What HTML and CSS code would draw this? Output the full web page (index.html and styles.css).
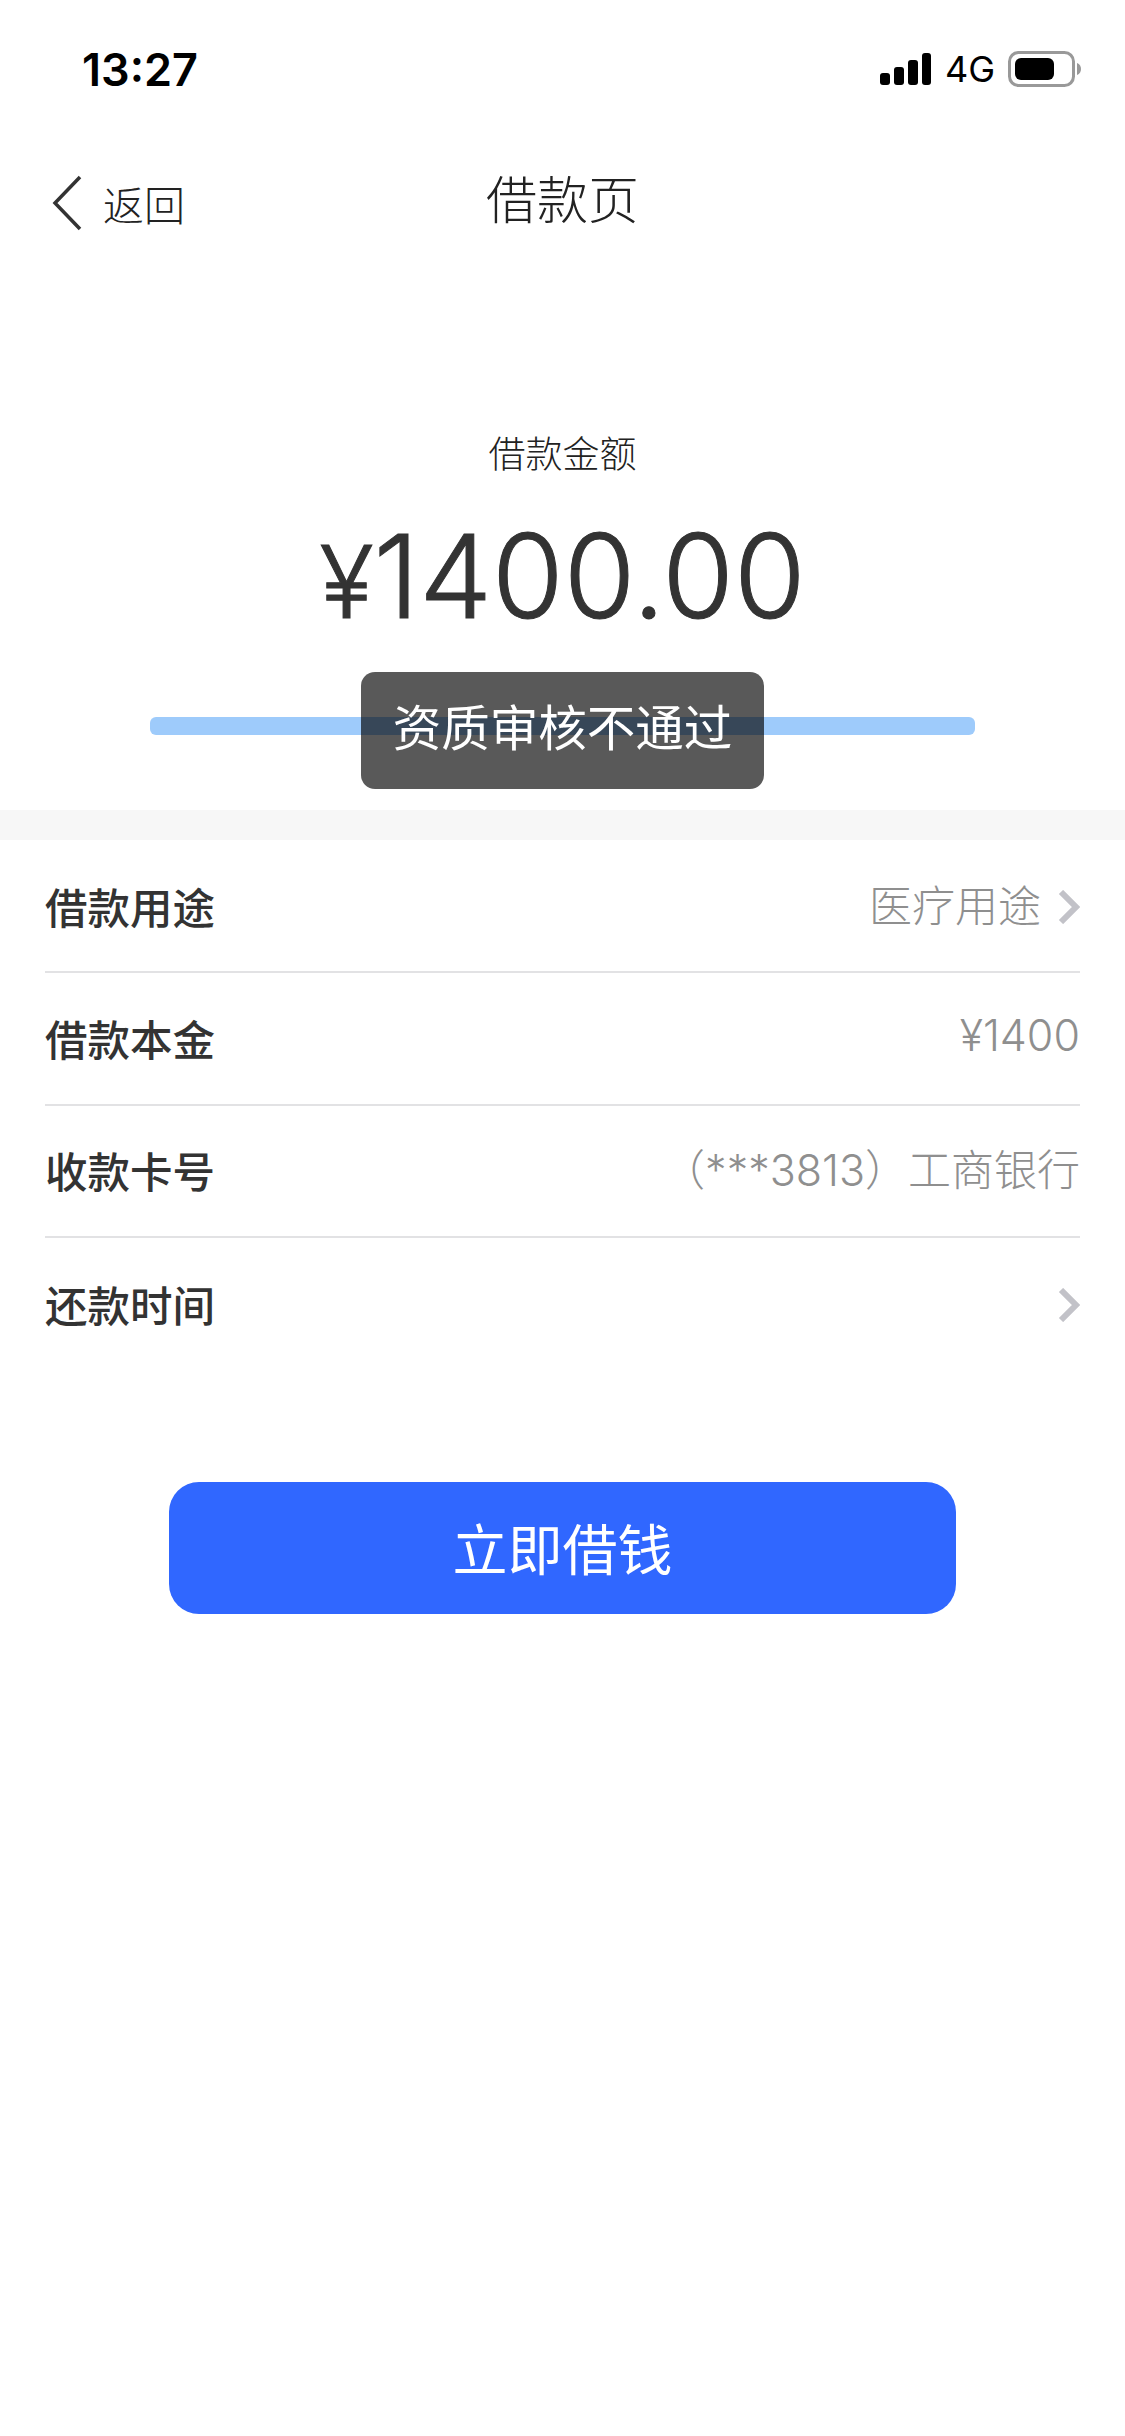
FILE: index.html
```html
<!DOCTYPE html>
<html lang="zh-CN">
<head>
  <meta charset="UTF-8" />
  <meta name="viewport" content="width=device-width, initial-scale=1.0" />
  <title>借款页</title>
  <link rel="stylesheet" href="styles.css">
</head>
<body>
  <div class="page">
    <!-- status bar -->
    <div class="status">
      <span class="time">13:27</span>
      <div class="status-right">
        <svg class="signal" viewBox="0 0 51 32" xmlns="http://www.w3.org/2000/svg">
          <rect x="0" y="20" width="10" height="12" rx="3"/>
          <rect x="14" y="14" width="10" height="18" rx="3"/>
          <rect x="28" y="7" width="10" height="25" rx="3"/>
          <rect x="42" y="0" width="9" height="32" rx="3"/>
        </svg>
        <span class="net">4G</span>
        <svg class="battery" viewBox="0 0 73 36" xmlns="http://www.w3.org/2000/svg">
          <rect x="1.5" y="1.5" width="64" height="33" rx="9" fill="none" stroke="#999" stroke-width="3"/>
          <rect x="7" y="7" width="39" height="22" rx="6" fill="#000"/>
          <path d="M69 12c3 1 4 3.500 4 6s-1 5-4 6z" fill="#999"/>
        </svg>
      </div>
    </div>

    <div class="nav">
      <div class="back">
        <svg class="back-icon" viewBox="0 0 30 56" xmlns="http://www.w3.org/2000/svg">
          <path d="M28 2L3 28l25 26" fill="none" stroke="#333" stroke-width="3.500"/>
        </svg>
        <span>返回</span>
      </div>
      <div class="nav-title">借款页</div>
    </div>

    <div class="summary">
      <div class="summary-label">借款金额</div>
      <div class="amount"><span class="yen">¥</span>1400.00</div>
      <div class="progress"></div>
      <div class="toast">资质审核不通过</div>
    </div>

    <div class="band"></div>

    <div class="list">
      <div class="row">
        <span class="row-label">借款用途</span>
        <span class="row-value">医疗用途
          <svg class="chevron" viewBox="0 0 22 34" xmlns="http://www.w3.org/2000/svg"><path d="M3 2l15 15L3 32" fill="none" stroke="#c2c2c8" stroke-width="6"/></svg>
        </span>
      </div>
      <div class="row">
        <span class="row-label">借款本金</span>
        <span class="row-value">¥1400</span>
      </div>
      <div class="row">
        <span class="row-label">收款卡号</span>
        <span class="row-value">（***3813）工商银行</span>
      </div>
      <div class="row">
        <span class="row-label">还款时间</span>
        <span class="row-value">
          <svg class="chevron" viewBox="0 0 22 34" xmlns="http://www.w3.org/2000/svg"><path d="M3 2l15 15L3 32" fill="none" stroke="#c2c2c8" stroke-width="6"/></svg>
        </span>
      </div>
    </div>

    <button class="submit">立即借钱</button>
  </div>
</body>
</html>
```

FILE: styles.css
```css
html, body {
  margin: 0;
  padding: 0;
  background: #fff;
  color: #333;
  font-family: "Inter", "Noto Sans CJK SC", sans-serif;
}

.page {
  width: 1125px;
  height: 2436px;
  overflow: hidden;
}

/* Status bar */
.status {
  display: flex;
  justify-content: space-between;
  align-items: center;
  height: 138px;
  padding: 0 44px 0 82px;
  box-sizing: border-box;
}
.time {
  font-size: 45px;
  font-weight: 600;
  color: #000;
}
.status-right {
  display: flex;
  align-items: center;
}
.signal { width: 51px; height: 32px; fill: #000; }
.net {
  margin: 0 13px 0 14px;
  font-size: 36px;
  color: #000;
}
.battery { width: 73px; height: 36px; }

/* Nav */
.nav {
  position: relative;
  display: flex;
  justify-content: center;
  align-items: center;
  height: 118px;
  margin-bottom: 6px;
}
.back {
  position: absolute;
  left: 52px;
  top: 35px;
  display: flex;
  align-items: center;
  gap: 21px;
  font-size: 41px;
  font-weight: 300;
  color: #222;
}
.back-icon { width: 30px; height: 56px; }
.nav-title {
  font-size: 51px;
  font-weight: 300;
  color: #222;
}

/* Amount block */
.summary {
  position: relative;
  height: 548px;
  padding-top: 166px;
  box-sizing: border-box;
  text-align: center;
}
.summary-label {
  font-size: 37px;
  font-weight: 300;
  line-height: 54px;
  color: #222;
}
.amount {
  margin-top: 24px;
  font-size: 116px;
  font-weight: 300;
  line-height: 140px;
  color: #333;
  -webkit-text-stroke: 1px #333;
}
.yen { font-size: 100px; }
.progress {
  height: 18px;
  margin: 65px 150px 0;
  border-radius: 6px;
  background: #9ecbfb;
}
/* toast sits over the progress bar */
.toast {
  position: absolute;
  left: 361px;
  top: 410px;
  width: 403px;
  height: 117px;
  border-radius: 14px;
  background: rgba(0, 0, 0, 0.65);
  color: #fff;
  font-size: 48.500px;
  font-weight: 400;
  line-height: 113px;
  text-align: center;
}

.band {
  height: 30px;
  background: #f7f7f7;
}

/* Rows */
.list { padding: 1px 45px 0; }
.row {
  display: flex;
  justify-content: space-between;
  align-items: center;
  height: 132.300px;
  box-sizing: border-box;
  border-bottom: 2px solid #e2e2e4;
}
.row:last-child { border-bottom: 0; }
.row-label {
  margin-bottom: 2px;
  font-size: 42.500px;
  font-weight: 500;
  color: #333;
}
.row-value {
  display: flex;
  align-items: center;
  gap: 17px;
  margin-bottom: 7px;
  font-size: 43px;
  font-weight: 300;
  color: #8f8f8f;
}
.chevron {
  width: 22px;
  height: 34px;
  margin-top: 8px;
}

/* Button */
.submit {
  display: block;
  width: 787px;
  height: 132px;
  margin: 112px 0 0 169px;
  padding: 0 0 4px;
  border: 0;
  border-radius: 30px;
  background: #3067ff;
  color: #fff;
  font-family: inherit;
  font-size: 55px;
  font-weight: 400;
}
```
